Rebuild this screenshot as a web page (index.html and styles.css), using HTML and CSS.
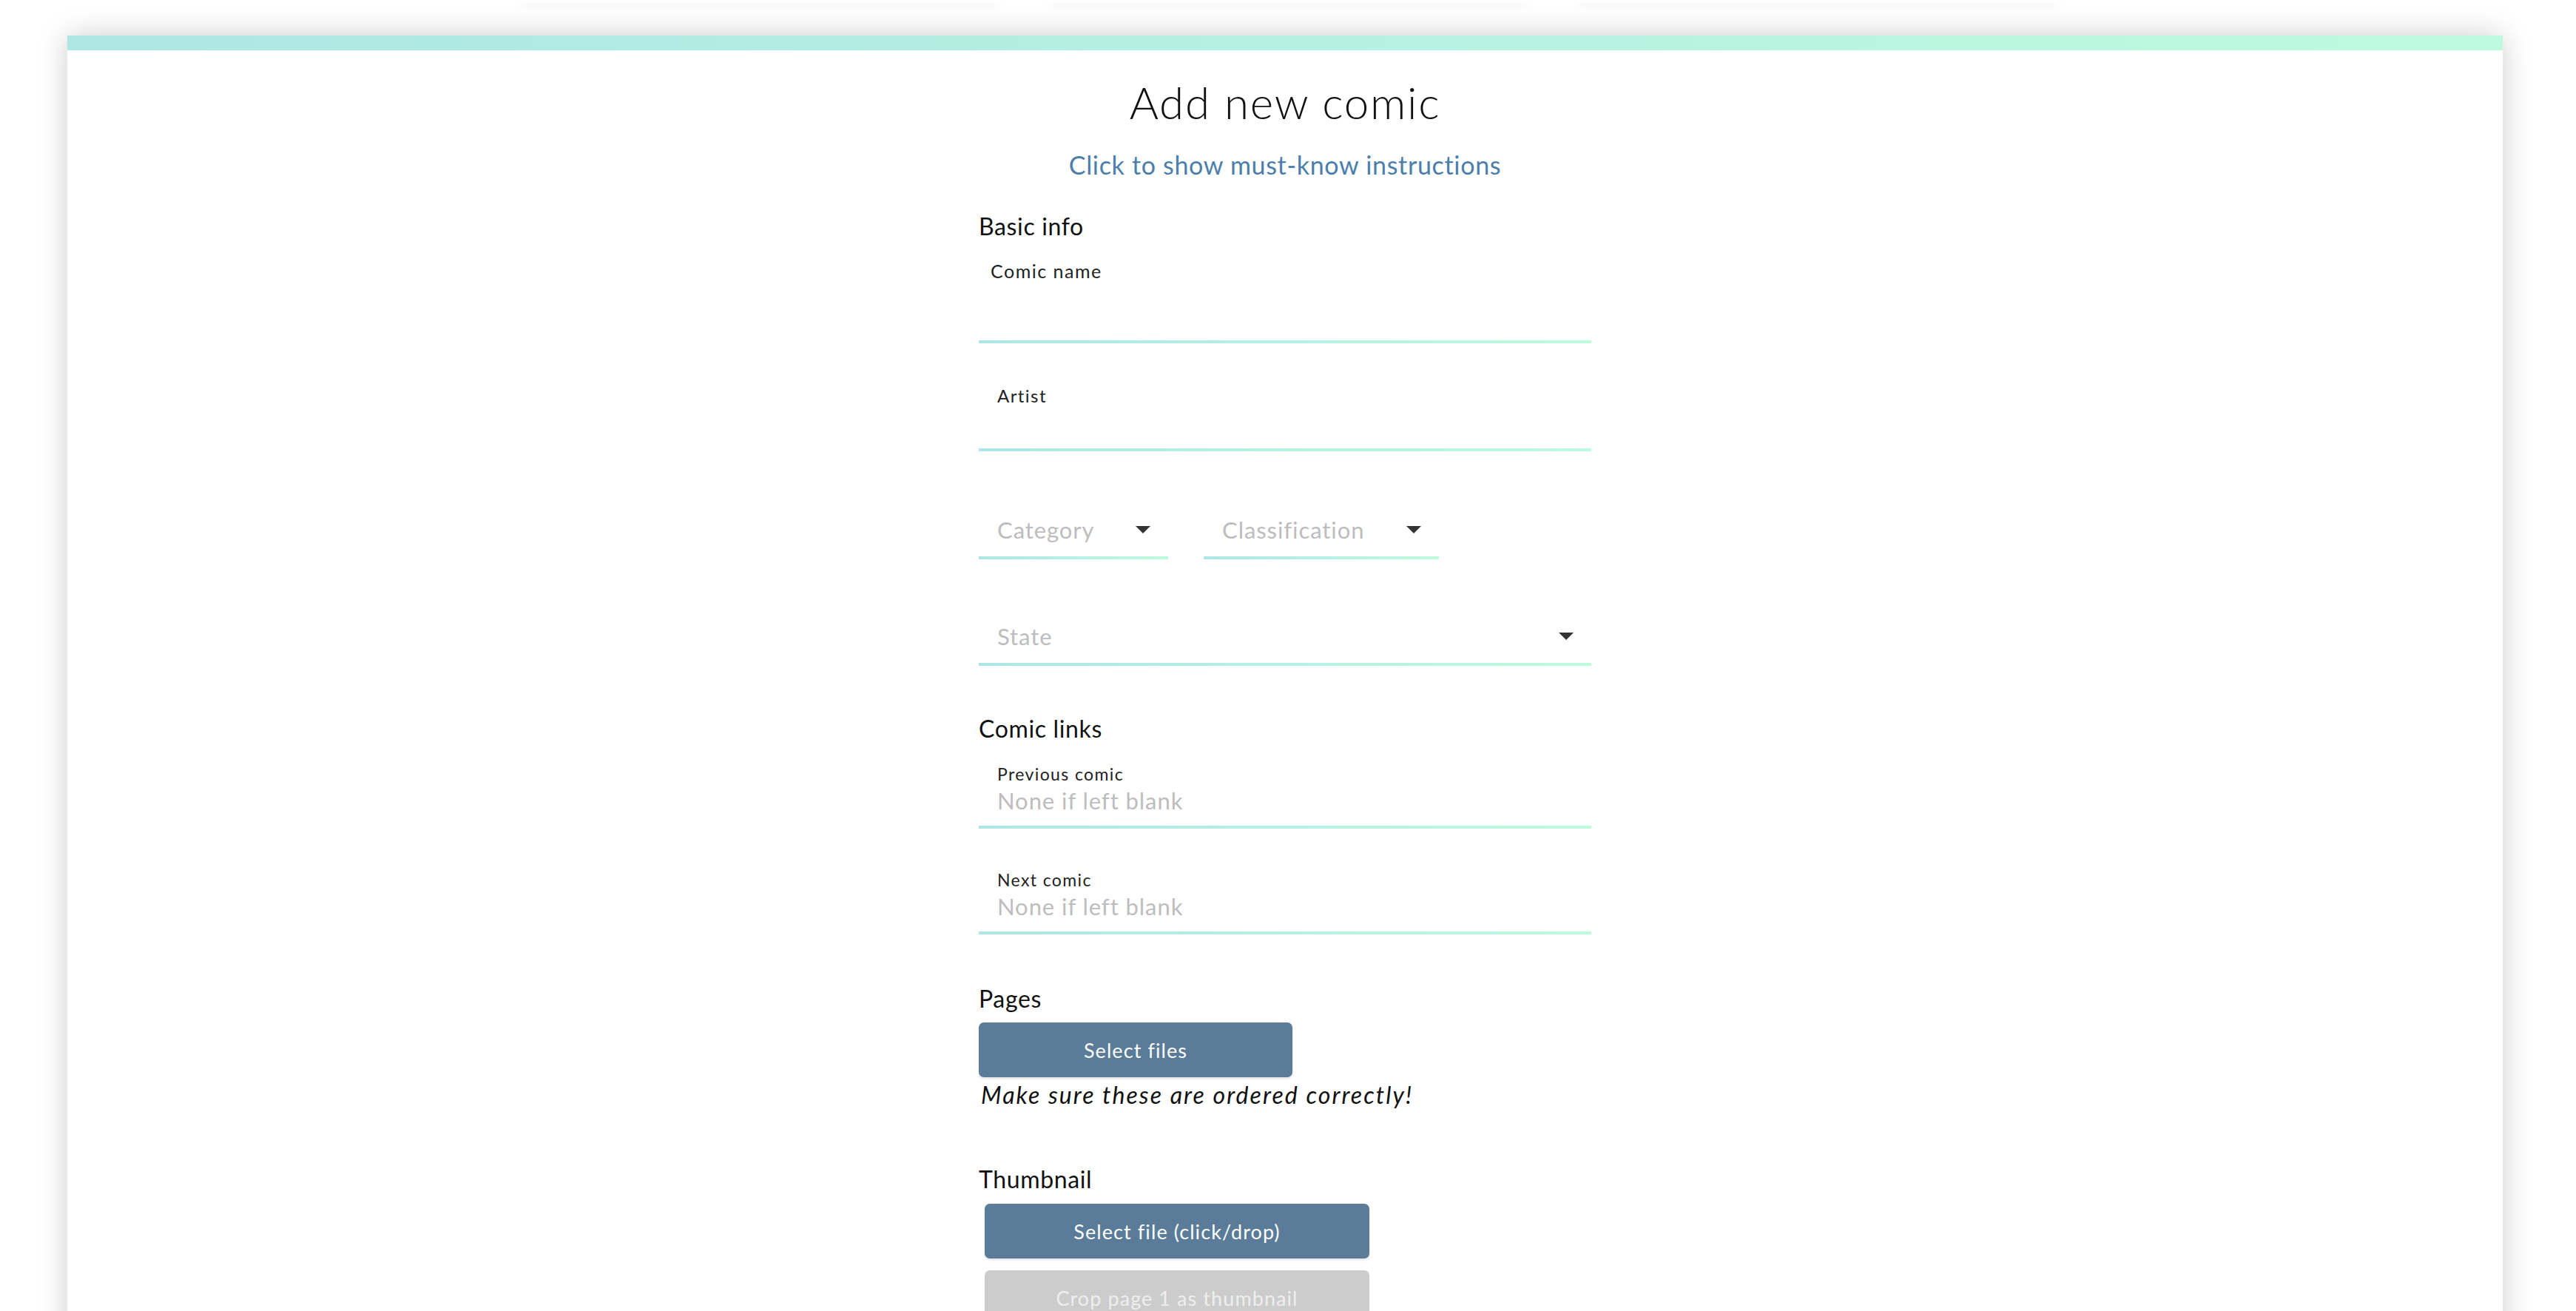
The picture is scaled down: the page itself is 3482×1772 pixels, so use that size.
FILE: index.html
```html
<!DOCTYPE html>
<html lang="en">
<head>
<meta charset="utf-8">
<title>Add new comic</title>
<link rel="stylesheet" href="styles.css">
</head>
<body>
<div class="tabs">
  <div class="tab"></div>
  <div class="tab"></div>
  <div class="tab"></div>
</div>
<main class="card">
  <h1 class="title">Add new comic</h1>
  <p class="instructions">Click to show must-know instructions</p>
  <form class="form">
    <h2 class="section section-first">Basic info</h2>
    <div class="field field-name">
      <label class="label">Comic name</label>
      <div class="input input-empty-tall"></div>
    </div>
    <div class="field field-artist">
      <label class="label label-artist">Artist</label>
      <div class="input input-empty"></div>
    </div>
    <div class="select-row">
      <div class="select select-category">
        <span class="placeholder">Category</span>
        <span class="arrow"></span>
      </div>
      <div class="select select-classification">
        <span class="placeholder">Classification</span>
        <span class="arrow"></span>
      </div>
    </div>
    <div class="select select-state">
      <span class="placeholder">State</span>
      <span class="arrow"></span>
    </div>

    <h2 class="section section-links">Comic links</h2>
    <div class="field field-prev">
      <label class="label label-small">Previous comic</label>
      <div class="input"><span class="placeholder">None if left blank</span></div>
    </div>
    <div class="field field-next">
      <label class="label label-small">Next comic</label>
      <div class="input"><span class="placeholder">None if left blank</span></div>
    </div>

    <h2 class="section section-pages">Pages</h2>
    <button type="button" class="btn btn-pages">Select files</button>
    <p class="note">Make sure these are ordered correctly!</p>

    <h2 class="section section-thumb">Thumbnail</h2>
    <button type="button" class="btn btn-thumb">Select file (click/drop)</button>
    <button type="button" class="btn btn-thumb btn-disabled">Crop page 1 as thumbnail</button>
  </form>
</main>
</body>
</html>
```

FILE: styles.css
```css
* { box-sizing: border-box; }

html, body {
  margin: 0;
  padding: 0;
  background: #ffffff;
}

body {
  font-family: Lato, "Noto Sans", "Liberation Sans", sans-serif;
  color: #111;
  overflow-x: hidden;
  letter-spacing: 0.04em;
}

.tabs {
  display: flex;
  justify-content: center;
  gap: 66px;
  height: 4px;
}

.tab {
  width: 649px;
  height: 4px;
  background: #fff;
  box-shadow: 0 3px 12px rgba(0, 0, 0, 0.07);
}

.card {
  margin: 44px 0 0 91px;
  width: 3292px;
  min-height: 1900px;
  background: #fff;
  border-style: solid;
  border-width: 20px 0 0 0;
  border-image: linear-gradient(to right, #ade6e4, #befadf) 1;
  box-shadow: 0 0 38px rgba(0, 0, 0, 0.2);
  padding-top: 34px;
  display: flex;
  flex-direction: column;
  align-items: center;
}

.title {
  margin: 0;
  font-size: 60px;
  line-height: 72px;
  font-weight: 300;
  letter-spacing: 0.03em;
  color: #111;
}

.instructions {
  margin: 29px 0 0;
  font-size: 34px;
  line-height: 40px;
  letter-spacing: 0.02em;
  color: #4b7eab;
}

.form {
  width: 828px;
  display: flex;
  flex-direction: column;
  align-items: flex-start;
}

.section {
  margin: 0;
  font-size: 32px;
  line-height: 40px;
  font-weight: 400;
  color: #111;
}

.section-first { margin-top: 43px; }
.section-links { margin-top: 65px; }
.section-pages { margin-top: 67px; }
.section-thumb { margin-top: 74px; }

.field {
  width: 828px;
  display: flex;
  flex-direction: column;
}

.field-name { margin-top: 25px; }
.field-artist { margin-top: 56px; }
.field-prev { margin-top: 27px; }
.field-next { margin-top: 55px; }

.label {
  font-size: 25px;
  line-height: 30px;
  letter-spacing: 0.06em;
  color: #222;
  padding-left: 16px;
}

.label-artist { padding-left: 25px; font-size: 24px; }

.label-small {
  font-size: 23px;
  line-height: 28px;
  padding-left: 25px;
}

.input,
.select {
  border-style: solid;
  border-width: 0 0 4px 0;
  border-image: linear-gradient(to right, #ade6e4, #befadf) 1;
  font-size: 31px;
  line-height: 40px;
}

.input {
  padding: 2px 0 14px 25px;
}

.input-empty-tall { height: 83px; padding: 0; }
.input-empty { height: 60px; padding: 0; }

.placeholder {
  font-size: 31px;
  line-height: 40px;
  letter-spacing: 0.03em;
  color: #bdbdbd;
}

.select-row {
  display: flex;
  gap: 48px;
  margin-top: 86px;
}

.select {
  display: flex;
  justify-content: space-between;
  align-items: flex-start;
  padding: 0 24px 16px 25px;
}

.select-category { width: 256px; }
.select-classification { width: 318px; }
.select-state { width: 828px; margin-top: 84px; }

.arrow {
  margin-top: 15px;
  width: 0;
  height: 0;
  border-left: 10px solid transparent;
  border-right: 10px solid transparent;
  border-top: 10px solid #333;
}

.btn {
  display: block;
  border: 0;
  border-radius: 7px;
  background: #5a7c99;
  color: #fff;
  font-family: inherit;
  font-size: 27px;
  letter-spacing: 0.04em;
  height: 74px;
  padding: 0;
  box-shadow: 0 2px 3px rgba(0, 0, 0, 0.12);
  cursor: pointer;
}

.btn-pages {
  width: 424px;
  margin-top: 12px;
}

.btn-thumb {
  width: 520px;
  margin: 13px 0 0 8px;
}

.btn-disabled {
  margin-top: 16px;
  background: #cccccc;
  color: #eeeeee;
  box-shadow: none;
}

.note {
  margin: 4px 0 0 3px;
  font-size: 32px;
  line-height: 40px;
  font-style: italic;
  letter-spacing: 0.065em;
  color: #111;
}
```
